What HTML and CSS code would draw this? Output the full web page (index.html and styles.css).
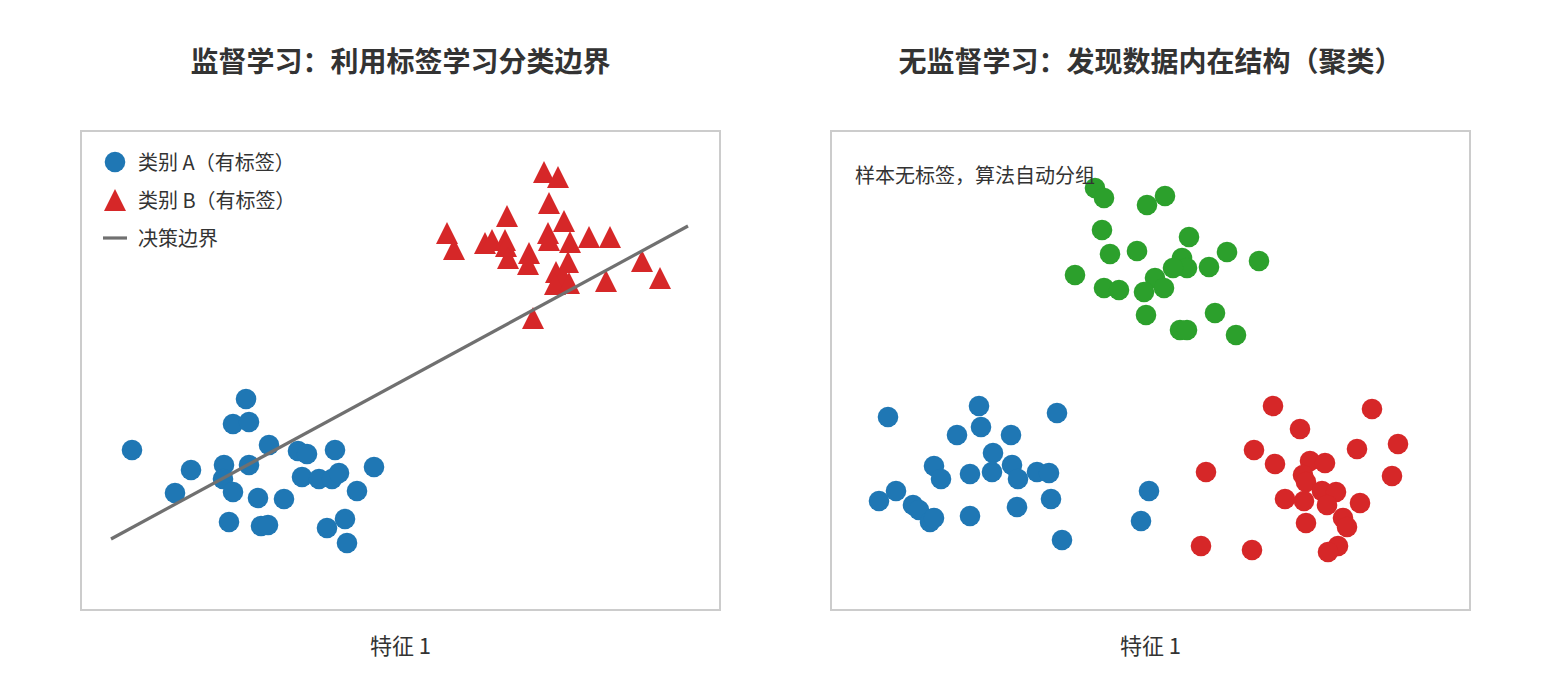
FILE: index.html
```html
<!DOCTYPE html>
<html lang="zh">
<head>
<meta charset="utf-8">
<title>监督学习与无监督学习</title>
<link rel="stylesheet" href="styles.css">
</head>
<body>
<div class="figure">
  <section class="panel">
    <h2 class="title">监督学习：利用标签学习分类边界</h2>
    <div class="axes">
      <svg viewBox="82 132 637 477" xmlns="http://www.w3.org/2000/svg">
        <g class="blue">
          <circle cx="246" cy="399" r="10.3"/><circle cx="233" cy="424" r="10.3"/><circle cx="249" cy="422" r="10.3"/>
          <circle cx="132" cy="450" r="10.3"/><circle cx="269" cy="445" r="10.3"/><circle cx="298" cy="451" r="10.3"/>
          <circle cx="307" cy="454" r="10.3"/><circle cx="335" cy="450" r="10.3"/><circle cx="191" cy="470" r="10.3"/>
          <circle cx="224" cy="465" r="10.3"/><circle cx="249" cy="465" r="10.3"/><circle cx="374" cy="467" r="10.3"/>
          <circle cx="223" cy="479" r="10.3"/><circle cx="302" cy="477" r="10.3"/><circle cx="319" cy="479" r="10.3"/>
          <circle cx="332" cy="479" r="10.3"/><circle cx="339" cy="473" r="10.3"/><circle cx="175" cy="493" r="10.3"/>
          <circle cx="233" cy="492" r="10.3"/><circle cx="258" cy="498" r="10.3"/><circle cx="284" cy="499" r="10.3"/>
          <circle cx="357" cy="491" r="10.3"/><circle cx="229" cy="522" r="10.3"/><circle cx="261" cy="526" r="10.3"/>
          <circle cx="268" cy="525" r="10.3"/><circle cx="327" cy="528" r="10.3"/><circle cx="345" cy="519" r="10.3"/>
          <circle cx="347" cy="543" r="10.3"/>
        </g>
        <g class="red">
          <path d="M544 161l11 22h-22z"/><path d="M558 166l11 22h-22z"/><path d="M549 192l11 22h-22z"/>
          <path d="M507 205l11 22h-22z"/><path d="M564 210l11 22h-22z"/><path d="M447 222l11 22h-22z"/>
          <path d="M454 238l11 22h-22z"/><path d="M485 232l11 22h-22z"/><path d="M492 229l11 22h-22z"/>
          <path d="M505 229l11 22h-22z"/><path d="M506 235l11 22h-22z"/><path d="M508 247l11 22h-22z"/>
          <path d="M548 222l11 22h-22z"/><path d="M549 229l11 22h-22z"/><path d="M570 231l11 22h-22z"/>
          <path d="M589 226l11 22h-22z"/><path d="M610 226l11 22h-22z"/><path d="M529 242l11 22h-22z"/>
          <path d="M528 253l11 22h-22z"/><path d="M568 251l11 22h-22z"/><path d="M556 261l11 22h-22z"/>
          <path d="M563 265l11 22h-22z"/><path d="M555 273l11 22h-22z"/><path d="M569 272l11 22h-22z"/>
          <path d="M642 250l11 22h-22z"/><path d="M660 267l11 22h-22z"/><path d="M606 270l11 22h-22z"/>
          <path d="M533 307l11 22h-22z"/>
        </g>
        <line class="boundary" x1="111" y1="539" x2="688" y2="226"/>
      </svg>
      <ul class="legend">
        <li class="legend-item">
          <svg class="legend-mark" viewBox="0 0 24 24"><circle class="dot-blue" cx="12" cy="12" r="10.3"/></svg>
          <span>类别 A（有标签）</span>
        </li>
        <li class="legend-item">
          <svg class="legend-mark" viewBox="0 0 24 24"><path class="tri-red" d="M12 1l11 22h-22z"/></svg>
          <span>类别 B（有标签）</span>
        </li>
        <li class="legend-item">
          <svg class="legend-mark" viewBox="0 0 24 24"><line class="boundary" x1="0" y1="12" x2="24" y2="12"/></svg>
          <span>决策边界</span>
        </li>
      </ul>
    </div>
    <div class="xlabel">特征 1</div>
  </section>

  <section class="panel">
    <h2 class="title">无监督学习：发现数据内在结构（聚类）</h2>
    <div class="axes">
      <svg viewBox="832 132 637 477" xmlns="http://www.w3.org/2000/svg">
        <g class="green">
          <circle cx="1095" cy="188" r="10.3"/><circle cx="1104" cy="198" r="10.3"/><circle cx="1165" cy="196" r="10.3"/>
          <circle cx="1147" cy="205" r="10.3"/><circle cx="1102" cy="230" r="10.3"/><circle cx="1189" cy="237" r="10.3"/>
          <circle cx="1110" cy="254" r="10.3"/><circle cx="1137" cy="251" r="10.3"/><circle cx="1227" cy="252" r="10.3"/>
          <circle cx="1259" cy="261" r="10.3"/><circle cx="1075" cy="275" r="10.3"/><circle cx="1182" cy="258" r="10.3"/>
          <circle cx="1187" cy="268" r="10.3"/><circle cx="1209" cy="267" r="10.3"/><circle cx="1173" cy="268" r="10.3"/>
          <circle cx="1155" cy="278" r="10.3"/><circle cx="1164" cy="288" r="10.3"/><circle cx="1144" cy="292" r="10.3"/>
          <circle cx="1104" cy="288" r="10.3"/><circle cx="1119" cy="290" r="10.3"/><circle cx="1146" cy="315" r="10.3"/>
          <circle cx="1215" cy="313" r="10.3"/><circle cx="1180" cy="330" r="10.3"/><circle cx="1187" cy="330" r="10.3"/>
          <circle cx="1236" cy="335" r="10.3"/>
        </g>
        <g class="blue">
          <circle cx="888" cy="417" r="10.3"/><circle cx="979" cy="406" r="10.3"/><circle cx="1057" cy="413" r="10.3"/>
          <circle cx="957" cy="435" r="10.3"/><circle cx="981" cy="427" r="10.3"/><circle cx="1011" cy="435" r="10.3"/>
          <circle cx="993" cy="453" r="10.3"/><circle cx="934" cy="466" r="10.3"/><circle cx="941" cy="479" r="10.3"/>
          <circle cx="970" cy="474" r="10.3"/><circle cx="992" cy="472" r="10.3"/><circle cx="1012" cy="465" r="10.3"/>
          <circle cx="1018" cy="479" r="10.3"/><circle cx="1037" cy="472" r="10.3"/><circle cx="1049" cy="473" r="10.3"/>
          <circle cx="896" cy="491" r="10.3"/><circle cx="879" cy="501" r="10.3"/><circle cx="913" cy="505" r="10.3"/>
          <circle cx="919" cy="510" r="10.3"/><circle cx="930" cy="522" r="10.3"/><circle cx="934" cy="518" r="10.3"/>
          <circle cx="970" cy="516" r="10.3"/><circle cx="1017" cy="507" r="10.3"/><circle cx="1051" cy="499" r="10.3"/>
          <circle cx="1062" cy="540" r="10.3"/><circle cx="1149" cy="491" r="10.3"/><circle cx="1141" cy="521" r="10.3"/>
        </g>
        <g class="red">
          <circle cx="1273" cy="406" r="10.3"/><circle cx="1372" cy="409" r="10.3"/><circle cx="1300" cy="429" r="10.3"/>
          <circle cx="1398" cy="444" r="10.3"/><circle cx="1254" cy="450" r="10.3"/><circle cx="1357" cy="449" r="10.3"/>
          <circle cx="1206" cy="472" r="10.3"/><circle cx="1275" cy="464" r="10.3"/><circle cx="1310" cy="461" r="10.3"/>
          <circle cx="1325" cy="463" r="10.3"/><circle cx="1392" cy="476" r="10.3"/><circle cx="1303" cy="475" r="10.3"/>
          <circle cx="1306" cy="482" r="10.3"/><circle cx="1322" cy="491" r="10.3"/><circle cx="1336" cy="492" r="10.3"/>
          <circle cx="1285" cy="499" r="10.3"/><circle cx="1304" cy="501" r="10.3"/><circle cx="1327" cy="505" r="10.3"/>
          <circle cx="1360" cy="503" r="10.3"/><circle cx="1343" cy="518" r="10.3"/><circle cx="1347" cy="527" r="10.3"/>
          <circle cx="1306" cy="523" r="10.3"/><circle cx="1201" cy="546" r="10.3"/><circle cx="1252" cy="550" r="10.3"/>
          <circle cx="1338" cy="546" r="10.3"/><circle cx="1328" cy="552" r="10.3"/>
        </g>
      </svg>
      <p class="note">样本无标签，算法自动分组</p>
    </div>
    <div class="xlabel">特征 1</div>
  </section>
</div>
</body>
</html>
```

FILE: styles.css
```css
html, body {
  margin: 0;
  padding: 0;
  background: #ffffff;
}

body {
  width: 1550px;
  height: 700px;
  overflow: hidden;
  font-family: "Noto Sans CJK SC", "Noto Sans", sans-serif;
  color: #333333;
}

.figure {
  display: flex;
  gap: 109px;
  padding: 40px 0 0 80px;
}

.panel {
  width: 641px;
  display: flex;
  flex-direction: column;
  align-items: center;
}

.title {
  margin: 0 0 50px;
  font-size: 28px;
  font-weight: 700;
  line-height: 40px;
  white-space: nowrap;
  color: #333333;
}

.axes {
  position: relative;
  width: 641px;
  height: 481px;
  box-sizing: border-box;
  border: 2px solid #cccccc;
  background: #ffffff;
}

.axes > svg {
  display: block;
  width: 637px;
  height: 477px;
}

.blue circle, .dot-blue { fill: #1f77b4; }
.red circle, .red path, .tri-red { fill: #d62728; }
.green circle { fill: #2ca02c; }

.boundary {
  stroke: #707070;
  stroke-width: 3.2;
  fill: none;
}

.legend {
  position: absolute;
  top: 11px;
  left: 21px;
  margin: 0;
  padding: 0;
  list-style: none;
  display: flex;
  flex-direction: column;
}

.legend-item {
  display: flex;
  align-items: center;
  gap: 11px;
  height: 38px;
  font-size: 20px;
  line-height: 1;
  color: #333333;
}

.legend-mark {
  width: 24px;
  height: 24px;
  flex: none;
}

.note {
  position: absolute;
  top: 28px;
  left: 23px;
  margin: 0;
  font-size: 20px;
  line-height: 30px;
  color: #333333;
  white-space: nowrap;
}

.xlabel {
  margin-top: 18px;
  font-size: 22px;
  line-height: 30px;
  color: #333333;
}
```
